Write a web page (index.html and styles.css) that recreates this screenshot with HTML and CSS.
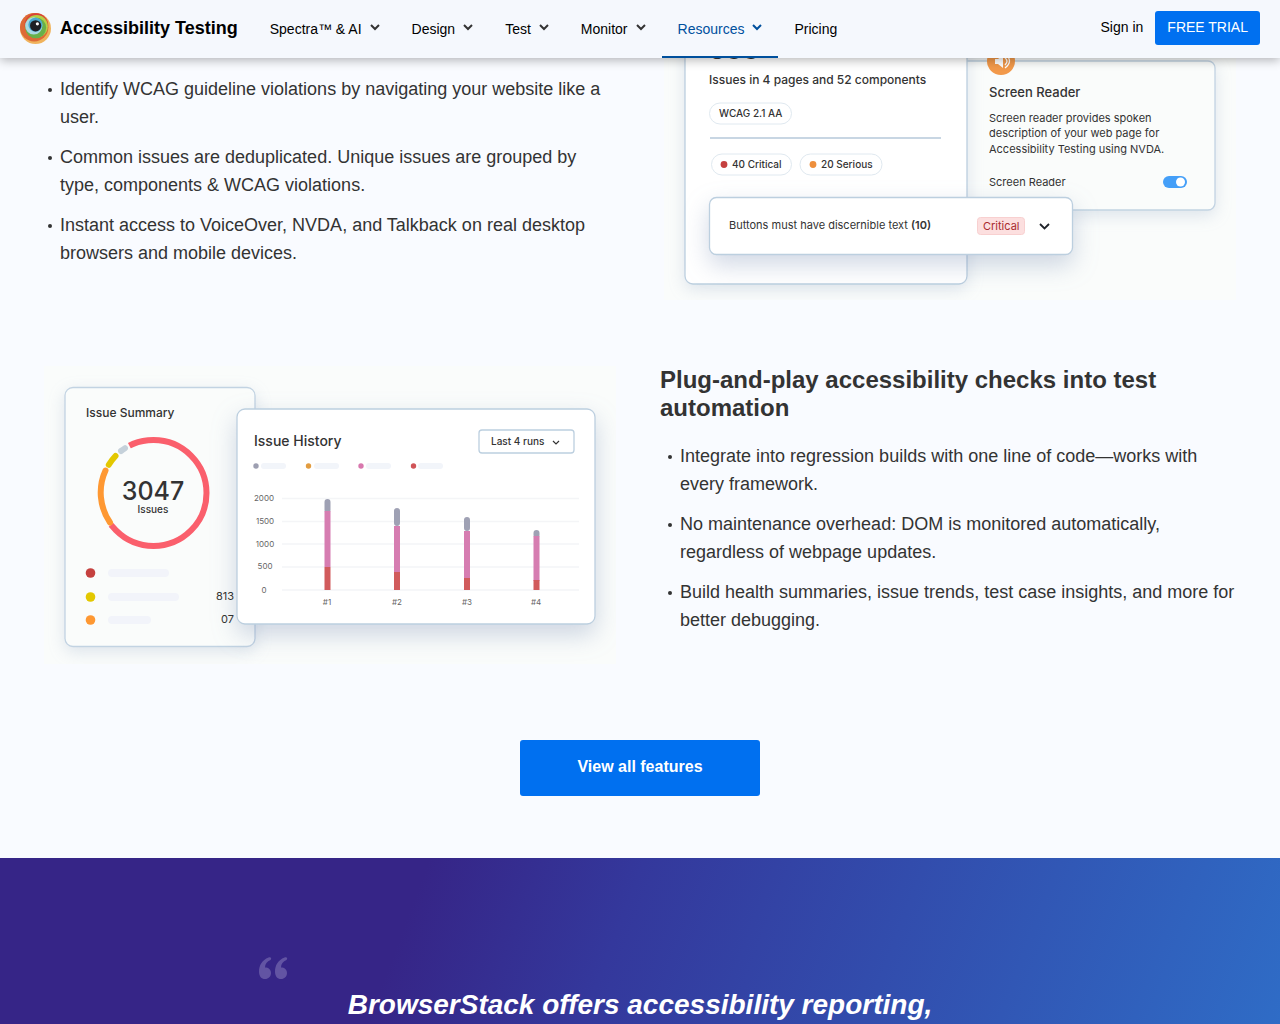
FILE: index.html
```html
<!DOCTYPE html>
<html lang="en">
<head>
<meta charset="utf-8">
<meta name="viewport" content="width=device-width, initial-scale=1">
<title>Accessibility Testing</title>
<link rel="stylesheet" href="styles.css">
</head>
<body>
<header class="header">
  <a class="brand" href="#">
    <svg class="brand-logo" viewBox="0 0 31 31" aria-hidden="true">
      <circle cx="15.5" cy="15.5" r="15.5" fill="#f0b35c"/>
      <circle cx="14.2" cy="14.2" r="14.2" fill="#dd6a36"/>
      <circle cx="16.4" cy="12" r="11.8" fill="#d9403a"/>
      <circle cx="16.6" cy="13.2" r="11.3" fill="#b5cf45"/>
      <circle cx="15.8" cy="14.8" r="10.4" fill="#68b04a"/>
      <circle cx="13.8" cy="12.8" r="8.6" fill="#a9d8e4"/>
      <circle cx="15.4" cy="11.8" r="7" fill="#4ba8cf"/>
      <circle cx="15.6" cy="12.8" r="5.6" fill="#1e1f24"/>
      <circle cx="17.4" cy="10.8" r="1.6" fill="#fff"/>
    </svg>
    <span>Accessibility Testing</span>
  </a>
  <nav class="nav" aria-label="Main">
    <a class="nav-item" href="#">Spectra™ &amp; AI <svg class="chevron" viewBox="0 0 10 10" aria-hidden="true"><path d="M1 3l4 4 4-4"/></svg></a>
    <a class="nav-item" href="#">Design <svg class="chevron" viewBox="0 0 10 10" aria-hidden="true"><path d="M1 3l4 4 4-4"/></svg></a>
    <a class="nav-item" href="#">Test <svg class="chevron" viewBox="0 0 10 10" aria-hidden="true"><path d="M1 3l4 4 4-4"/></svg></a>
    <a class="nav-item" href="#">Monitor <svg class="chevron" viewBox="0 0 10 10" aria-hidden="true"><path d="M1 3l4 4 4-4"/></svg></a>
    <a class="nav-item nav-item-active" href="#">Resources <svg class="chevron" viewBox="0 0 10 10" aria-hidden="true"><path d="M1 3l4 4 4-4"/></svg></a>
    <a class="nav-item" href="#">Pricing</a>
  </nav>
  <div class="account">
    <a class="sign-in" href="#">Sign in</a>
    <button class="trial" type="button">FREE TRIAL</button>
  </div>
</header>

<main>
  <section class="features">
    <div class="feature">
      <div class="feature-copy feature-copy-first">
        <ul class="points">
          <li>Identify WCAG guideline violations by navigating your website like a user.</li>
          <li>Common issues are deduplicated. Unique issues are grouped by type, components &amp; WCAG violations.</li>
          <li>Instant access to VoiceOver, NVDA, and Talkback on real desktop browsers and mobile devices.</li>
        </ul>
      </div>
      <svg class="art" viewBox="0 0 572 242" role="img" aria-label="Accessibility report with a screen reader panel">
        <rect width="572" height="242" fill="#fafcfb"/>
        <g class="art-soft"><rect x="280" y="3" width="271" height="149" rx="7" class="pane"/></g>
        <circle cx="337" cy="3" r="14" fill="#f2994a"/>
        <path d="M331 1h3l5-4v13l-5-4h-3z" fill="#fff"/>
        <path d="M341 0q4 3 0 7M341-4q9 7 0 14" fill="none" stroke="#fff" stroke-width="1.300"/>
        <text x="325" y="39" class="t13">Screen Reader</text>
        <text x="325" y="64" class="t11">Screen reader provides spoken</text>
        <text x="325" y="79" class="t11">description of your web page for</text>
        <text x="325" y="95" class="t11">Accessibility Testing using NVDA.</text>
        <text x="325" y="128" class="t11">Screen Reader</text>
        <rect x="499" y="118" width="24" height="12" rx="6" fill="#449ff8"/>
        <circle cx="516.500" cy="124" r="4.500" fill="#fff"/>
        <g class="art-soft"><rect x="21" y="-30" width="282" height="256" rx="8" class="card"/></g>
        <text x="45" y="1" class="t26">588</text>
        <text x="45" y="26" class="t12">Issues in 4 pages and 52 components</text>
        <rect x="45.500" y="45" width="82" height="21" rx="10.500" class="pill"/>
        <text x="55" y="59" class="t10">WCAG 2.1 AA</text>
        <path d="M46 80h231" stroke="#c8d6e3" stroke-width="2"/>
        <rect x="47.500" y="96" width="80" height="21" rx="10.500" class="pill"/>
        <circle cx="60" cy="106.500" r="3.400" fill="#c5403f"/>
        <text x="68" y="110" class="t10">40 Critical</text>
        <rect x="136" y="96" width="82" height="21" rx="10.500" class="pill"/>
        <circle cx="149" cy="106.500" r="3.400" fill="#ee8f3c"/>
        <text x="157" y="110" class="t10">20 Serious</text>
        <g class="art-lifted"><rect x="45.500" y="139.500" width="363" height="57" rx="7" class="card"/></g>
        <text x="65" y="171" class="t11">Buttons must have discernible text <tspan class="strong">(10)</tspan></text>
        <rect x="313.500" y="159.500" width="47" height="17" rx="3" fill="#fcdfdf" stroke="#f8d0d0"/>
        <text x="319" y="172" class="t11 critical">Critical</text>
        <path d="M376 166l4.500 4.500 4.500-4.500" fill="none" stroke="#20242a" stroke-width="1.800"/>
      </svg>
    </div>

    <div class="feature">
      <svg class="art" viewBox="0 0 572 298" role="img" aria-label="Issue summary and issue history charts">
        <rect width="572" height="298" fill="#fafcfb"/>
        <g class="art-soft"><rect x="21" y="21.500" width="190" height="259" rx="8" class="pane"/></g>
        <text x="42" y="51" class="t12">Issue Summary</text>
        <g fill="none" stroke-width="6">
          <circle cx="109.500" cy="127" r="53" stroke="#fa5f6c"/>
          <path d="M67.100 158.800A53 53 0 0 1 85.400 79.800" stroke="#fafcfb" stroke-width="8"/>
          <g stroke-linecap="round">
            <path d="M66 156.500A53 53 0 0 1 61.500 104.500" stroke="#fe9832"/>
            <path d="M64.800 98.800A53 53 0 0 1 71.500 90" stroke="#e3c800"/>
            <path d="M77 85A53 53 0 0 1 81 82.200" stroke="#c5d1da"/>
          </g>
        </g>
        <text x="109" y="134" class="t25 middle">3047</text>
        <text x="109" y="147" class="t10 middle">Issues</text>
        <circle cx="46.500" cy="207" r="4.800" fill="#c5413f"/>
        <circle cx="46.500" cy="231" r="4.800" fill="#e3c800"/>
        <circle cx="46.500" cy="254" r="4.800" fill="#fe9832"/>
        <g fill="#f2f4fa">
          <rect x="64" y="203" width="61" height="8" rx="4"/>
          <rect x="64" y="227" width="71" height="8" rx="4"/>
          <rect x="64" y="250" width="43" height="8" rx="4"/>
        </g>
        <g class="art-lifted"><rect x="193" y="43" width="358" height="215" rx="8" class="card"/></g>
        <text x="190" y="234" class="t11 end">813</text>
        <text x="190" y="257" class="t11 end">07</text>
        <text x="210" y="80" class="t14">Issue History</text>
        <rect x="435" y="64" width="95" height="23" rx="3" fill="#fff" stroke="#bccfdf" stroke-width="1.300"/>
        <text x="447" y="79" class="t10">Last 4 runs</text>
        <path d="M509 75l3 3 3-3" fill="none" stroke="#333" stroke-width="1.200"/>
        <circle cx="212" cy="100" r="2.700" fill="#9d9fb1"/>
        <circle cx="264.500" cy="100" r="2.700" fill="#e29c40"/>
        <circle cx="317" cy="100" r="2.700" fill="#d878ae"/>
        <circle cx="369.500" cy="100" r="2.700" fill="#d05458"/>
        <g fill="#f2f5fa">
          <rect x="217" y="97" width="25" height="6" rx="3"/>
          <rect x="270" y="97" width="25" height="6" rx="3"/>
          <rect x="322" y="97" width="25" height="6" rx="3"/>
          <rect x="374" y="97" width="25" height="6" rx="3"/>
        </g>
        <path d="M238 132.500h297M238 155.500h297M238 178h297M238 201h297M238 224h297" stroke="#f4f5f7" stroke-width="1.500"/>
        <g class="t8 middle">
          <text x="220" y="135">2000</text>
          <text x="221" y="158">1500</text>
          <text x="221" y="181">1000</text>
          <text x="221" y="203">500</text>
          <text x="220" y="227">0</text>
          <text x="283" y="239">#1</text>
          <text x="353" y="239">#2</text>
          <text x="423" y="239">#3</text>
          <text x="492" y="239">#4</text>
        </g>
        <g stroke="#9fa1b4" stroke-width="6" stroke-linecap="round">
          <path d="M283.500 136v8M353 145v12M423 154v8M492.500 167v2"/>
        </g>
        <g stroke="#d67db1" stroke-width="6">
          <path d="M283.500 145v56M353 160v47M423 165v47M492.500 170v45"/>
        </g>
        <g stroke="#d15b5c" stroke-width="6">
          <path d="M283.500 201v23M353 206v18M423 212v12M492.500 214v10"/>
        </g>
      </svg>
      <div class="feature-copy">
        <h2 class="feature-title">Plug-and-play accessibility checks into test automation</h2>
        <ul class="points">
          <li>Integrate into regression builds with one line of code—works with every framework.</li>
          <li>No maintenance overhead: DOM is monitored automatically, regardless of webpage updates.</li>
          <li>Build health summaries, issue trends, test case insights, and more for better debugging.</li>
        </ul>
      </div>
    </div>
    <a class="view-all" href="#">View all features</a>
  </section>

  <section class="testimonial">
    <figure class="quote">
      <svg class="quote-mark" viewBox="0 0 30 24" aria-hidden="true">
        <path d="M10.500 1.500C4 4 1 9.500 1 15.500c0 5 2.500 7.500 6 7.500s6-2.500 6-6-2.500-5.500-6-5.500c0-3.500 2-6 5.500-7.500C14 2.500 13 .500 10.500 1.500z"/>
        <path d="M26.500 1.500C20 4 17 9.500 17 15.500c0 5 2.500 7.500 6 7.500s6-2.500 6-6-2.500-5.500-6-5.500c0-3.500 2-6 5.500-7.500C30 2.500 29 .500 26.500 1.500z"/>
      </svg>
      <blockquote class="quote-text">BrowserStack offers accessibility reporting,</blockquote>
    </figure>
  </section>
</main>
</body>
</html>
```
FILE: styles.css
```css
* {
  box-sizing: border-box;
}

body {
  margin: 0;
  background: #f9fbff;
  color: #333;
  font-family: "Liberation Sans", Arial, sans-serif;
}

a {
  color: inherit;
  text-decoration: none;
}

/* Header */
.header {
  position: sticky;
  top: 0;
  z-index: 10;
  display: flex;
  height: 58px;
  padding: 0 20px;
  background: #f5f8fd;
  box-shadow: 0 2px 10px rgba(0, 0, 0, 0.3);
  color: #000;
  font-size: 14px;
}

.brand {
  display: flex;
  align-items: center;
  gap: 9px;
  padding-bottom: 2px;
  font-size: 18px;
  font-weight: 700;
}

.brand-logo {
  width: 31px;
  height: 31px;
}

.nav {
  display: flex;
  margin-left: 16px;
}

.nav-item {
  display: flex;
  align-items: center;
  gap: 8px;
  padding: 2px 16px 0;
  border-bottom: 2px solid transparent;
}

.nav-item-active {
  border-bottom-color: #00509d;
  color: #00509d;
}

.chevron {
  width: 10px;
  height: 10px;
  margin-bottom: 4px;
  fill: none;
  stroke: #333;
  stroke-width: 2;
}

.nav-item-active .chevron {
  stroke: currentColor;
}

.account {
  display: flex;
  align-items: center;
  gap: 12px;
  margin-left: auto;
  padding-bottom: 2px;
}

.sign-in {
  padding-bottom: 2px;
}

.trial {
  height: 34px;
  padding: 0 12px 2px;
  border: 0;
  border-radius: 3px;
  background: #0070f0;
  color: #fff;
  font: inherit;
}

/* Features */
.features {
  display: flex;
  flex-direction: column;
  gap: 66px;
  max-width: 1280px;
  margin: 0 auto;
  padding: 0 40px 62px;
}

.feature {
  display: grid;
  grid-template-columns: 1fr 1fr;
  gap: 40px;
}

.feature-copy-first {
  padding-top: 17px;
}

.feature-title {
  margin: 0 0 20px;
  font-size: 24px;
  line-height: 28px;
}

.points {
  display: flex;
  flex-direction: column;
  gap: 12px;
  margin: 0;
  padding: 0;
  list-style: none;
  font-size: 18px;
  line-height: 28px;
}

.points li {
  display: flex;
}

.points li::before {
  flex: none;
  width: 4px;
  height: 4px;
  margin: 13px 8px 0;
  border-radius: 50%;
  background: #333;
  content: "";
}

.view-all {
  align-self: center;
  width: 240px;
  margin-top: 10px;
  padding: 13px 14px 15px;
  border-radius: 3px;
  background: #0070f0;
  color: #fff;
  font-size: 16px;
  font-weight: 700;
  line-height: 28px;
  text-align: center;
}

/* Illustrations */
.art {
  display: block;
  width: 100%;
  padding: 0 4px;
  font-family: Inter, sans-serif;
  fill: #333;
}

.card {
  fill: #fff;
  stroke: #bccfdf;
  stroke-width: 1.300px;
}

.pane {
  fill: #fafcfb;
  stroke: #c2d3e2;
  stroke-width: 1.300px;
}

.pill {
  fill: #fff;
  stroke: #e0e9f0;
}

.art-soft {
  filter: drop-shadow(0 5px 8px rgba(110, 135, 175, 0.2));
}

.art-lifted {
  filter: drop-shadow(0 10px 12px rgba(90, 115, 160, 0.28));
}

.t8 { font-size: 8px; fill: #666; }
.t10 { font-size: 10px; font-weight: 500; }
.t11 { font-size: 11px; font-weight: 400; }
.t12 { font-size: 12px; font-weight: 500; }
.t13 { font-size: 13px; font-weight: 500; }
.t14 { font-size: 14px; font-weight: 500; }
.t25 { font-size: 25px; font-weight: 500; }
.t26 { font-size: 26px; font-weight: 700; }
.strong { font-weight: 600; }
.critical { fill: #a92b30; }
.middle { text-anchor: middle; }
.end { text-anchor: end; }

/* Testimonial */
.testimonial {
  padding: 98px 20px 2px;
  background: linear-gradient(111deg, #362587 32%, #34389c 48%, #2f6cc6);
  color: #fff;
}

.quote {
  max-width: 764px;
  margin: 0 auto;
}

.quote-mark {
  display: block;
  width: 30px;
  height: 24px;
  fill: #6254a3;
}

.quote-text {
  margin: 8px 0 0;
  font-size: 28px;
  font-style: italic;
  font-weight: 700;
  line-height: 34px;
  text-align: center;
}
```
